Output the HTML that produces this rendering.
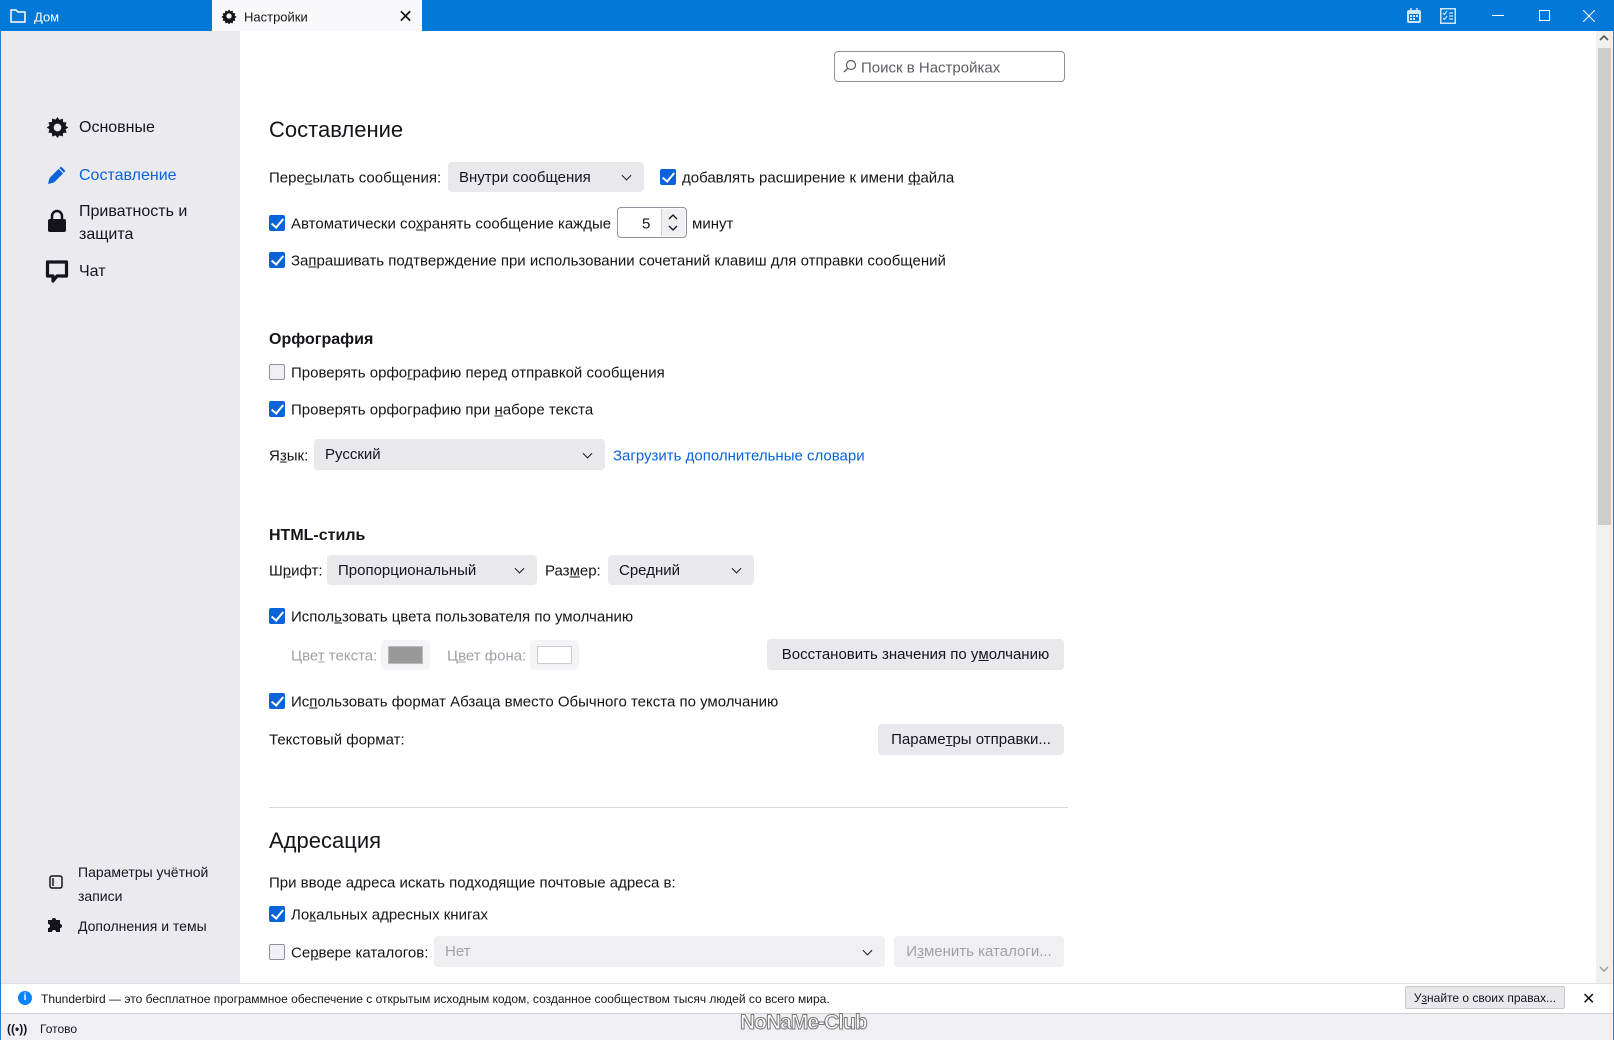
<!DOCTYPE html>
<html><head><meta charset="utf-8"><style>
*{box-sizing:border-box;margin:0;padding:0}
body{width:1614px;height:1040px;overflow:hidden;background:#fff;font-family:"Liberation Sans","Noto Sans CJK SC",sans-serif;font-size:15px;color:#15141a;position:relative}
.a{position:absolute;white-space:nowrap}
.cb{position:absolute;width:16px;height:16px;border-radius:2px;background:#0a63d8}
.cb::after{content:"";position:absolute;left:5px;top:1px;width:5px;height:10px;border:solid #fff;border-width:0 2px 2px 0;transform:rotate(40deg)}
.cb.off{background:#f0f0f4;border:1px solid #8f8f9d}
.cb.off::after{display:none}
.sel{position:absolute;background:#e9e9ed;border-radius:4px;padding-left:11px;display:flex;align-items:center}
.sel::after{content:"";position:absolute;right:14px;top:50%;width:6px;height:6px;border:solid #15141a;border-width:0 1.6px 1.6px 0;transform:translateY(-70%) rotate(45deg)}
.btn{position:absolute;background:#e9e9ed;border-radius:4px;display:flex;align-items:center;justify-content:center}
.t{position:absolute;white-space:nowrap;transform:translateY(calc(-50% + 1px))}
u{text-decoration:underline}
</style></head><body>
<div class="a" style="left:0;top:0;width:1614px;height:31px;background:#0078d7"></div>
<svg class="a" style="left:10px;top:9px" width="16" height="14" viewBox="0 0 16 14"><path d="M1 1h5l2 2h7v10H1z" fill="none" stroke="#fff" stroke-width="1.5"/></svg>
<div class="t" style="left:34px;top:16px;color:#fff;font-size:13px">Дом</div>
<div class="a" style="left:212px;top:0;width:210px;height:31px;background:#f9f9fb"></div>
<svg class="a" style="left:221px;top:8px" width="16" height="16" viewBox="0 0 24 24"><path d="M12 2l2 3 3.5-1 .5 3.5 3.5.5-1 3.5 3 2-3 2 1 3.5-3.5.5-.5 3.5-3.5-1-2 3-2-3-3.5 1-.5-3.5-3.5-.5 1-3.5-3-2 3-2-1-3.5 3.5-.5.5-3.5 3.5 1z" fill="#15141a"/><circle cx="12" cy="12" r="4" fill="#f9f9fb"/></svg>
<div class="t" style="left:244px;top:16px;font-size:13px">Настройки</div>
<div class="t" style="left:398px;top:16px;font-size:18px">✕</div>
<svg class="a" style="left:1406px;top:7px" width="16" height="17" viewBox="0 0 16 17"><rect x="1" y="3" width="14" height="13" rx="2" fill="#cfe6fb"/><rect x="3" y="7" width="10" height="7" fill="#0078d7"/><path d="M4 8h2v2H4zM7 8h2v2H7zM10 8h2v2h-2zM4 11h2v2H4zM7 11h2v2H7z" fill="#cfe6fb"/><path d="M5 1v3M11 1v3" stroke="#cfe6fb" stroke-width="1.5"/></svg>
<svg class="a" style="left:1440px;top:8px" width="16" height="16" viewBox="0 0 16 16"><rect x=".75" y=".75" width="14.5" height="14.5" fill="none" stroke="#cfe6fb" stroke-width="1.5"/><path d="M3 5l1.5 1.5L7 3M3 10l1.5 1.5L7 8M9 5h4M9 8h4M9 11h4" stroke="#cfe6fb" stroke-width="1.2" fill="none"/></svg>
<div class="a" style="left:1492px;top:15px;width:12px;height:1px;background:#fff"></div>
<div class="a" style="left:1539px;top:10px;width:11px;height:11px;border:1px solid #fff"></div>
<svg class="a" style="left:1583px;top:10px" width="12" height="12"><path d="M0 0L12 12M12 0L0 12" stroke="#fff" stroke-width="1"/></svg>
<div class="a" style="left:0;top:31px;width:1px;height:1009px;background:#2b7cd3"></div>
<div class="a" style="left:1613px;top:31px;width:1px;height:1009px;background:#2b7cd3"></div>
<div class="a" style="left:1px;top:31px;width:239px;height:952px;background:#ebebef"></div>
<svg class="a" style="left:46px;top:116px" width="23" height="23" viewBox="0 0 24 24"><path d="M12 1l2 3 3.5-1.2.4 3.6 3.6.4L20.3 10l3 2-3 2 1.2 3.4-3.6.4-.4 3.6L14 20.2 12 23l-2-2.8-3.5 1.2-.4-3.6-3.6-.4L3.7 14l-3-2 3-2-1.2-3.4 3.6-.4.4-3.6L10 3.8z" fill="#15141a"/><circle cx="12" cy="12" r="4" fill="#ebebef"/></svg>
<div class="t" style="left:79px;top:127px;font-size:16px">Основные</div>
<svg class="a" style="left:46px;top:164px" width="22" height="22" viewBox="0 0 22 22"><path d="M2 20l1.5-6L15 2.5l4.5 4.5L8 18.5z" fill="#0a63d8"/><path d="M13 4.5l4.5 4.5" stroke="#ebebef" stroke-width="1.2"/></svg>
<div class="t" style="left:79px;top:175px;font-size:16px;color:#0a63d8">Составление</div>
<svg class="a" style="left:47px;top:209px" width="20" height="24" viewBox="0 0 20 24"><path d="M5 11V7a5 5 0 0110 0v4" fill="none" stroke="#15141a" stroke-width="2.5"/><rect x="1" y="10" width="18" height="13" rx="2" fill="#15141a"/></svg>
<div class="t" style="left:79px;top:211px;font-size:16px">Приватность и</div>
<div class="t" style="left:79px;top:234px;font-size:16px">защита</div>
<svg class="a" style="left:45px;top:259px" width="24" height="25" viewBox="0 0 24 25"><path d="M2.5 3h19v14H12l-4 5v-5H2.5z" fill="none" stroke="#15141a" stroke-width="3.2" stroke-linejoin="round"/></svg>
<div class="t" style="left:79px;top:271px;font-size:16px">Чат</div>
<svg class="a" style="left:49px;top:875px" width="14" height="14" viewBox="0 0 14 14"><rect x="1" y="1" width="12" height="12" rx="2" fill="none" stroke="#15141a" stroke-width="1.5"/><path d="M4 3v8" stroke="#15141a" stroke-width="1.5"/></svg>
<div class="t" style="left:78px;top:871px;font-size:14px">Параметры учётной</div>
<div class="t" style="left:78px;top:895px;font-size:14px">записи</div>
<svg class="a" style="left:47px;top:916px" width="16" height="17" viewBox="0 0 16 17"><path d="M1 4h4a2 2 0 114 0h4v4a2 2 0 110 4v4H9a2 2 0 10-4 0H1v-4a2 2 0 100-4z" fill="#15141a"/></svg>
<div class="t" style="left:78px;top:925px;font-size:14px">Дополнения и темы</div>
<div class="a" style="left:834px;top:51px;width:231px;height:31px;border:1px solid #8f8f9d;border-radius:4px"></div>
<svg class="a" style="left:843px;top:59px" width="14" height="14" viewBox="0 0 14 14"><circle cx="8" cy="6" r="4.5" fill="none" stroke="#5b5b66" stroke-width="1.2"/><path d="M4.8 9.2L1 13" stroke="#5b5b66" stroke-width="1.3"/></svg>
<div class="t" style="left:861px;top:67px;color:#5b5b66">Поиск в Настройках</div>
<div class="t" style="left:269px;top:129px;font-size:22px;color:#15141a">Составление</div>
<div class="t" style="left:269px;top:177px">Пере<u>с</u>ылать сообщения:</div>
<div class="sel" style="left:448px;top:162px;width:196px;height:30px">Внутри сообщения</div>
<div class="cb" style="left:660px;top:169px"></div>
<div class="t" style="left:682px;top:177px">добавлять расширение к имени <u>ф</u>айла</div>
<div class="cb" style="left:269px;top:215px"></div>
<div class="t" style="left:291px;top:223px">Автоматически со<u>х</u>ранять сообщение каждые</div>
<div class="a" style="left:617px;top:207px;width:70px;height:31px;border:1px solid #8f8f9d;border-radius:4px"></div>
<div class="t" style="left:642px;top:223px">5</div>
<div class="a" style="left:661px;top:209px;width:24px;height:27px;background:#f0f0f4;border-left:1px solid #cfcfd8"></div>
<svg class="a" style="left:667px;top:211px" width="12" height="24"><path d="M2 8l4-4 4 4M2 15l4 4 4-4" fill="none" stroke="#15141a" stroke-width="1.3"/></svg>
<div class="t" style="left:692px;top:223px">минут</div>
<div class="cb" style="left:269px;top:252px"></div>
<div class="t" style="left:291px;top:260px">За<u>п</u>рашивать подтверждение при использовании сочетаний клавиш для отправки сообщений</div>
<div class="t" style="left:269px;top:339px;font-size:16px;font-weight:bold">Орфография</div>
<div class="cb off" style="left:269px;top:364px"></div>
<div class="t" style="left:291px;top:372px">Проверять орфо<u>г</u>рафию перед отправкой сообщения</div>
<div class="cb" style="left:269px;top:401px"></div>
<div class="t" style="left:291px;top:409px">Проверять орфографию при <u>н</u>аборе текста</div>
<div class="t" style="left:269px;top:455px">Я<u>з</u>ык:</div>
<div class="sel" style="left:314px;top:439px;width:291px;height:31px">Русский</div>
<div class="t" style="left:613px;top:455px;color:#0a63d8">Загрузить дополнительные словари</div>
<div class="t" style="left:269px;top:535px;font-size:16px;font-weight:bold">HTML-стиль</div>
<div class="t" style="left:269px;top:570px">Ш<u>р</u>ифт:</div>
<div class="sel" style="left:327px;top:555px;width:210px;height:30px">Пропорциональный</div>
<div class="t" style="left:545px;top:570px">Раз<u>м</u>ер:</div>
<div class="sel" style="left:608px;top:555px;width:146px;height:30px">Средний</div>
<div class="cb" style="left:269px;top:608px"></div>
<div class="t" style="left:291px;top:616px">Испол<u>ь</u>зовать цвета пользователя по умолчанию</div>
<div class="t" style="left:291px;top:655px;color:#a0a0a8">Цве<u>т</u> текста:</div>
<div class="a" style="left:381px;top:640px;width:49px;height:30px;background:#f4f4f6;border-radius:4px"></div>
<div class="a" style="left:388px;top:646px;width:35px;height:18px;background:#999;border:1px solid #bbb"></div>
<div class="t" style="left:447px;top:655px;color:#a0a0a8">Ц<u>в</u>ет фона:</div>
<div class="a" style="left:530px;top:640px;width:49px;height:30px;background:#f4f4f6;border-radius:4px"></div>
<div class="a" style="left:537px;top:646px;width:35px;height:18px;background:#fff;border:1px solid #ccc"></div>
<div class="btn" style="left:767px;top:639px;width:297px;height:31px">Восстановить значения по у<u>м</u>олчанию</div>
<div class="cb" style="left:269px;top:693px"></div>
<div class="t" style="left:291px;top:701px">Ис<u>п</u>ользовать формат Абзаца вместо Обычного текста по умолчанию</div>
<div class="t" style="left:269px;top:739px">Текстовый формат:</div>
<div class="btn" style="left:878px;top:724px;width:186px;height:31px">Параме<u>т</u>ры отправки...</div>
<div class="a" style="left:269px;top:807px;width:799px;height:1px;background:#d7d7db"></div>
<div class="t" style="left:269px;top:840px;font-size:22px">Адресация</div>
<div class="t" style="left:269px;top:882px">При вводе адреса искать подходящие почтовые адреса в:</div>
<div class="cb" style="left:269px;top:906px"></div>
<div class="t" style="left:291px;top:914px">Ло<u>к</u>альных адресных книгах</div>
<div class="cb off" style="left:269px;top:944px"></div>
<div class="t" style="left:291px;top:952px">Се<u>р</u>вере каталогов:</div>
<div class="sel" style="left:434px;top:936px;width:451px;height:31px;color:#a0a0a8;background:#f0f0f3">Нет</div>
<div class="btn" style="left:894px;top:936px;width:170px;height:31px;color:#a0a0a8;background:#f0f0f3">И<u>з</u>менить каталоги...</div>
<div class="a" style="left:1596px;top:31px;width:17px;height:952px;background:#f0f0f0"></div>
<div class="a" style="left:1598px;top:48px;width:13px;height:477px;background:#cdcdcd"></div>
<svg class="a" style="left:1599px;top:34px" width="10" height="8"><path d="M1 6l4-4 4 4" stroke="#555" stroke-width="1.6" fill="none"/></svg>
<svg class="a" style="left:1599px;top:965px" width="10" height="8"><path d="M1 2l4 4 4-4" stroke="#999" stroke-width="1.4" fill="none"/></svg>
<div class="a" style="left:1px;top:983px;width:1612px;height:31px;background:#fff;border-top:1px solid #e0e0e6;border-bottom:1px solid #d0d0d6"></div>
<div class="a" style="left:18px;top:991px;width:14px;height:14px;border-radius:50%;background:#0a84ff;color:#fff;font-size:10px;font-weight:bold;text-align:center;line-height:14px">i</div>
<div class="t" style="left:41px;top:998px;font-size:12px">Thunderbird — это бесплатное программное обеспечение с открытым исходным кодом, созданное сообществом тысяч людей со всего мира.</div>
<div class="btn" style="left:1405px;top:986px;width:160px;height:23px;font-size:12px;background:#e8e8ec;border:1px solid #c8c8cc;border-radius:2px">У<u>з</u>найте о своих правах...</div>
<div class="t" style="left:1582px;top:998px;font-size:16px">✕</div>
<div class="a" style="left:1px;top:1014px;width:1612px;height:26px;background:#f0f0f4"></div>
<div class="t" style="left:7px;top:1028px;font-size:12px;font-weight:bold">((•))</div>
<div class="t" style="left:40px;top:1028px;font-size:12px">Готово</div>
<div class="t" style="left:740px;top:1022px;font-size:21px;color:#fff;-webkit-text-stroke:1px #777;font-weight:bold;letter-spacing:-1px">NoNaMe-Club</div>
</body></html>
